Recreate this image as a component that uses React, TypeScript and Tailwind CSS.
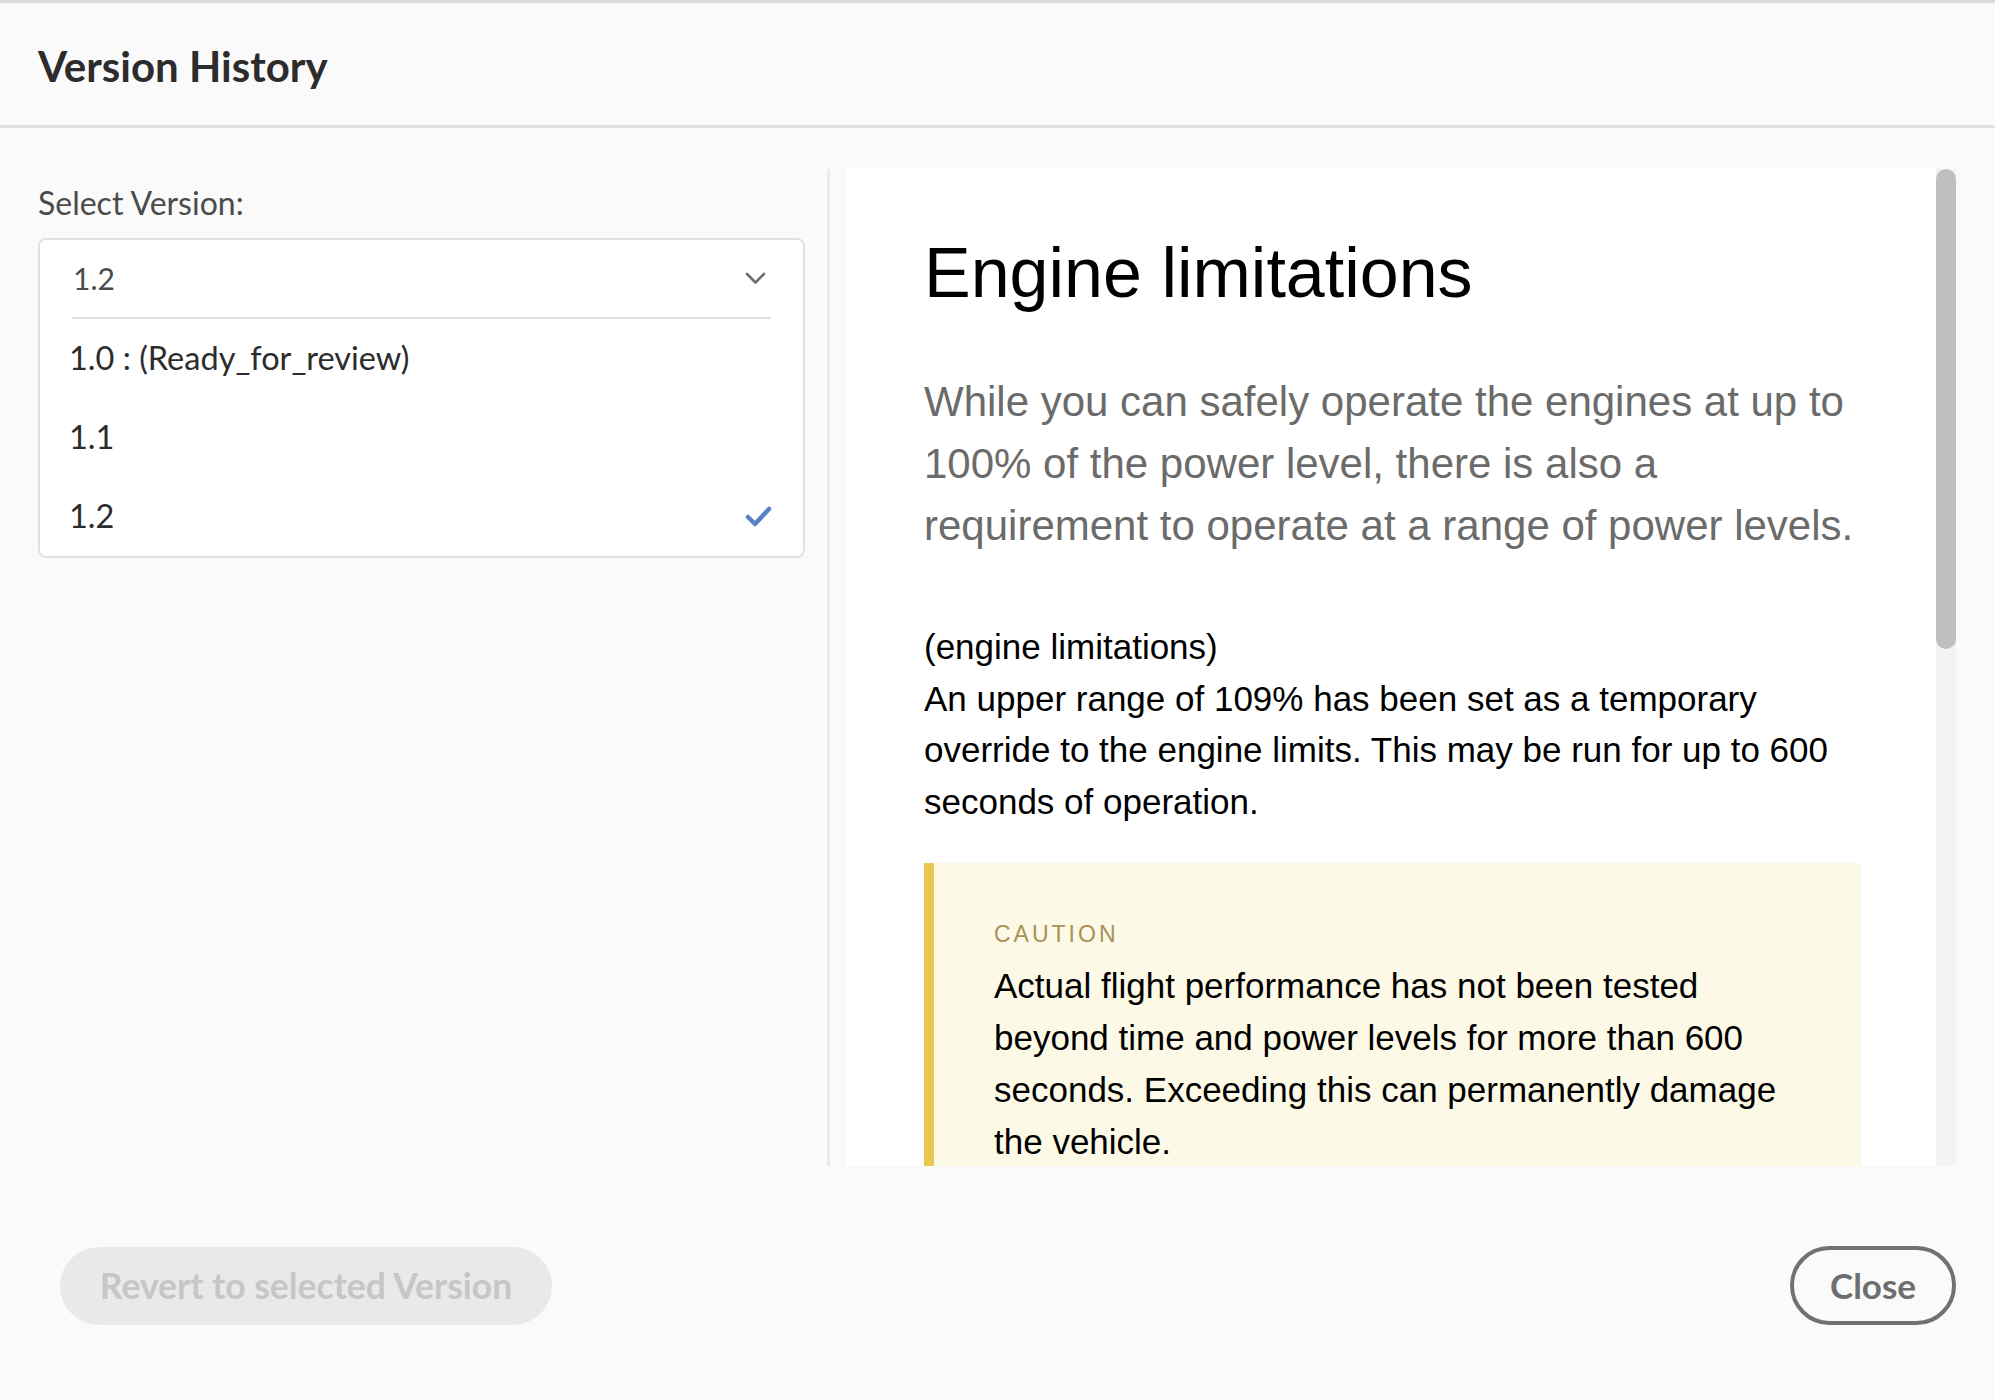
import React from "react";

const ui = { fontFamily: "Lato, 'Open Sans', sans-serif" };
const arial = { fontFamily: "'Liberation Sans', Arial, sans-serif" };

function Chevron() {
  return (
    <svg width="21" height="13" viewBox="0 0 21 13" className="block">
      <polyline points="2,2 10.5,10.5 19,2" fill="none" stroke="#6e6e6e" strokeWidth="2.6" strokeLinecap="round" strokeLinejoin="round" />
    </svg>
  );
}

function Check() {
  return (
    <svg width="28" height="24" viewBox="0 0 28 24" className="block">
      <polyline points="3,12 10,19 24,4" fill="none" stroke="#5a80c6" strokeWidth="4.5" strokeLinecap="round" strokeLinejoin="round" />
    </svg>
  );
}

export default function App() {
  const options = [
    { label: "1.0 : (Ready_for_review)", checked: false },
    { label: "1.1", checked: false },
    { label: "1.2", checked: true },
  ];
  return (
    <div className="w-[1995px] h-[1400px] bg-[#fafafa] flex flex-col overflow-hidden" style={ui}>
      <div className="h-[3px] bg-[#dcdcdc]" />
      <div className="h-[125px] border-b-[3px] border-[#e1e1e1] pl-[38px] pt-[38px]">
        <div className="text-[42px] leading-[50px] font-bold text-[#2c2c2c]">Version History</div>
      </div>

      <div className="flex pl-[38px] pr-[39px] pt-[41px] h-[1038px]">
        <div className="w-[767px] flex flex-col">
          <div className="text-[32px] leading-[40px] text-[#4b4b4b] mt-[14px]">Select Version:</div>
          <div className="mt-[15px] border-2 border-[#e1e1e1] rounded-[8px] bg-white">
            <div className="mx-[32px] h-[79px] border-b-2 border-[#dedede] flex items-center justify-between">
              <span className="pl-[1px] text-[30px] text-[#4b4b4b]">1.2</span>
              <span className="mr-[5px]"><Chevron /></span>
            </div>
            {options.map((o) => (
              <div key={o.label} className="h-[79px] pl-[29px] pr-[30px] flex items-center justify-between">
                <span className="text-[32.5px] text-[#2c2c2c]">{o.label}</span>
                {o.checked && <Check />}
              </div>
            ))}
          </div>
        </div>

        <div className="ml-[22px] w-[3px] bg-[#ebebeb] h-[997px]" />

        <div className="ml-[16px] flex-1 flex h-[997px]">
          <div className="flex-1 bg-white overflow-hidden pl-[78px] pr-[75px]" style={arial}>
            <h1 className="text-[70px] leading-[83px] text-black mt-[63px]">Engine limitations</h1>
            <p className="mt-[56px] text-[42px] leading-[62px] text-[#6b6b6b]">
              While you can safely operate the engines at up to 100% of the power level, there is also a requirement to operate at a range of power levels.
            </p>
            <div className="mt-[64px] text-[35px] leading-[51.5px] text-black">
              <div>(engine limitations)</div>
              <p>An upper range of 109% has been set as a temporary override to the engine limits. This may be run for up to 600 seconds of operation.</p>
            </div>
            <div className="mt-[36px] border-l-[10px] border-[#e9c84d] bg-[#fcf9e6] pl-[60px] pr-[40px] pt-[54px] pb-[40px]">
              <div className="text-[23px] leading-[34.5px] tracking-[3px] text-[#a99155]">CAUTION</div>
              <p className="mt-[8px] text-[35px] leading-[52px] text-black">
                Actual flight performance has not been tested beyond time and power levels for more than 600 seconds. Exceeding this can permanently damage the vehicle.
              </p>
            </div>
          </div>
          <div className="w-[20px] bg-[#f3f3f3]">
            <div className="h-[480px] rounded-full bg-[#bfbfbf]" />
          </div>
        </div>
      </div>

      <div className="flex justify-between items-center pl-[60px] pr-[39px] mt-[80px]">
        <button className="h-[78px] w-[492px] rounded-full bg-[#e9e9e9] text-[#c6c6c6] text-[35.5px] font-bold">
          Revert to selected Version
        </button>
        <button className="h-[79px] w-[166px] rounded-full border-4 border-[#717171] text-[#6e6e6e] text-[35px] font-bold">
          Close
        </button>
      </div>
    </div>
  );
}
